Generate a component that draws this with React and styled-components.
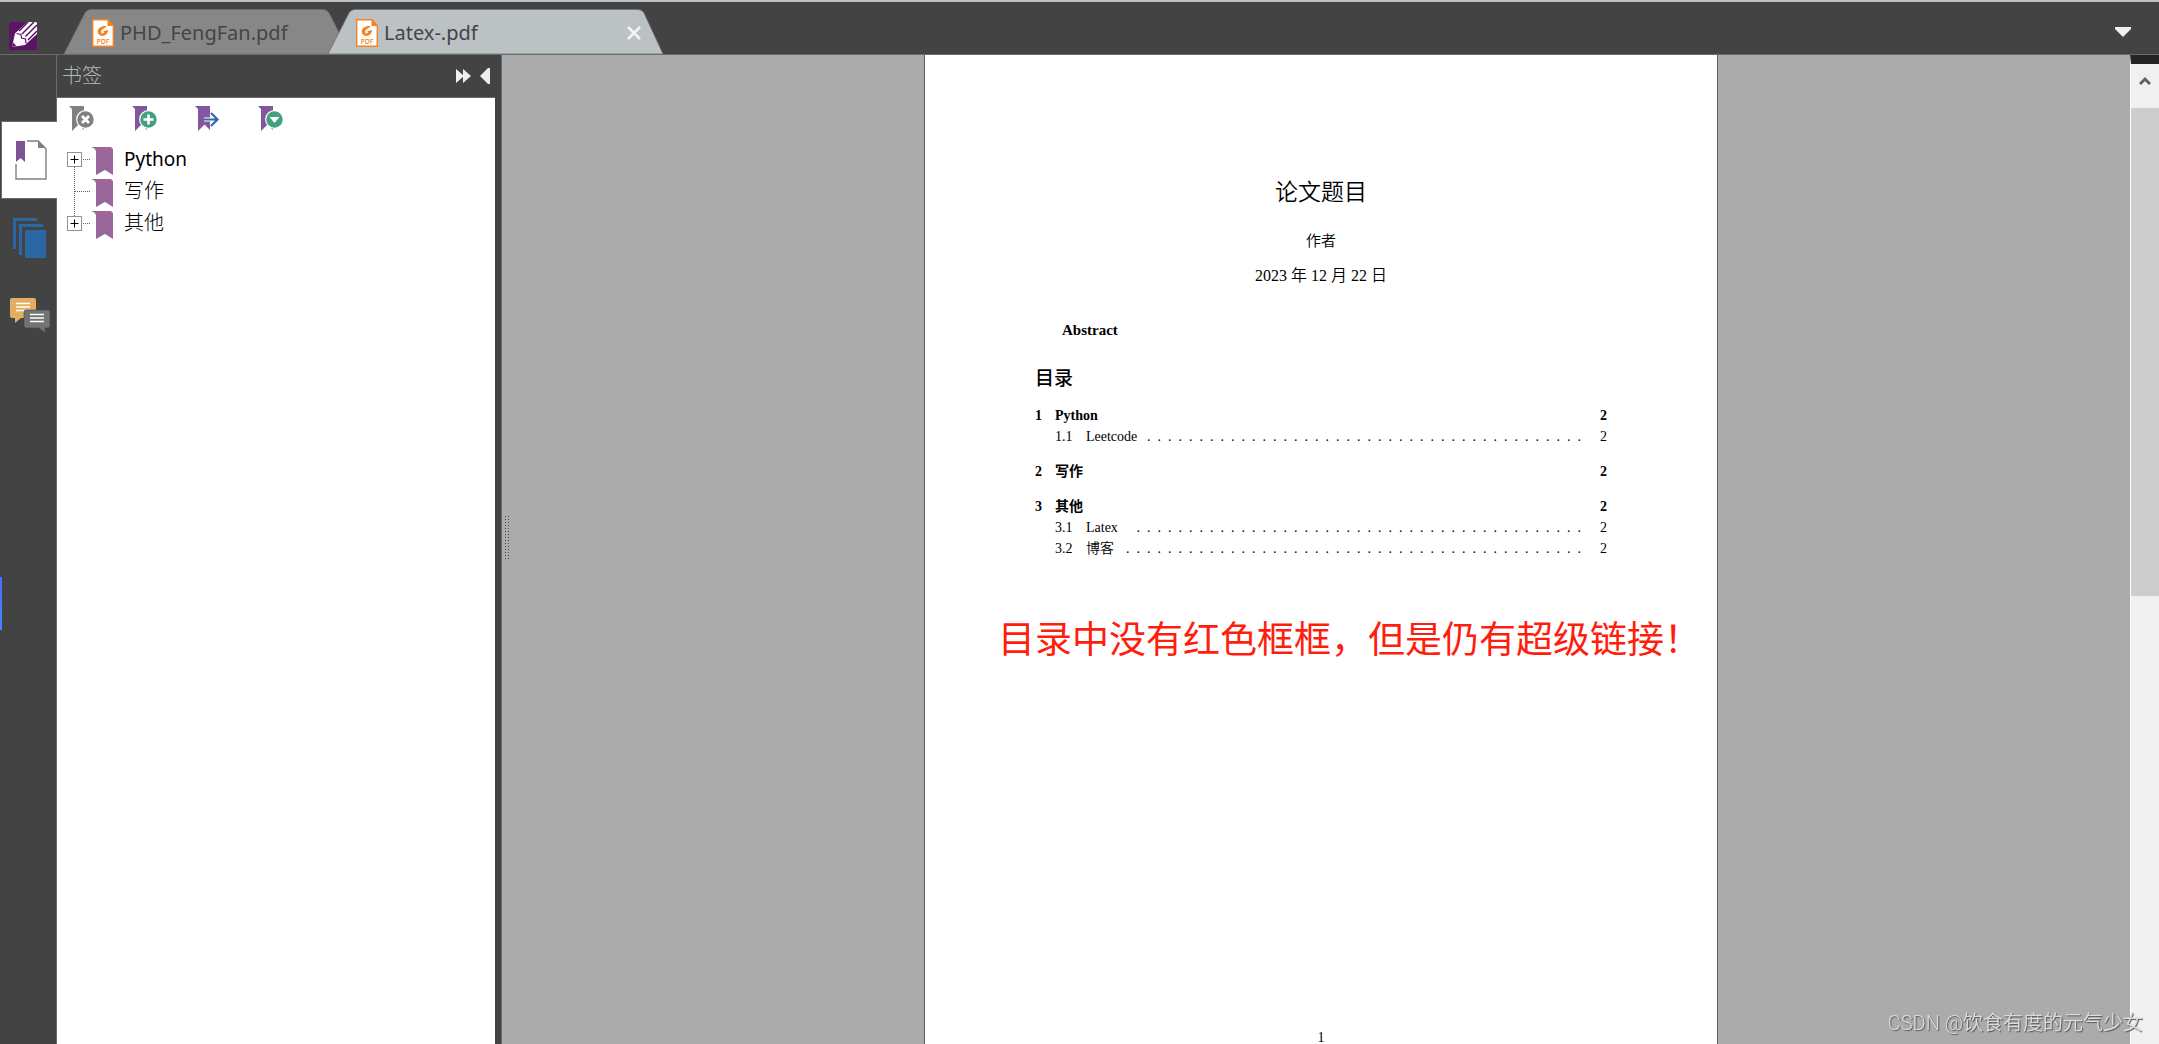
import styled, { createGlobalStyle, css } from "styled-components"

const GlobalStyle = createGlobalStyle`
    * {
        box-sizing: border-box;
    }
    body {
        margin: 0;
        font-family: "Noto Sans", "Noto Sans CJK SC", sans-serif;
        background-color: #434343;
    }
    button {
        display: flex;
        align-items: center;
        justify-content: center;
        padding: 0;
        border: none;
        background: none;
        font: inherit;
        color: inherit;
        cursor: pointer;
    }
    svg {
        display: block;
        flex-shrink: 0;
    }
`
const Container = styled.div`
    height: 100vh;
    display: flex;
    flex-direction: column;
    overflow: hidden;
    border-top: 2px solid #bcc2c6;
`

// top bar
const TopBar = styled.header`
    height: 53px;
    flex-shrink: 0;
    display: flex;
    align-items: flex-end;
    background-color: #434343;
    border-bottom: 1px solid #6b6b6b;
`
const Logo = styled.div`
    width: 64px;
    padding: 0 0 4px 9px;
`
const Tabs = styled.nav`
    flex: 1;
    display: flex;
`
const Tab = styled.div`
    position: relative;
    width: ${props => props.$active ? "335px" : "286px"};
    height: 45px;
    margin-right: -22px;
    display: flex;
    align-items: center;
    padding: 3px 21px 0 28px;
    color: #434548;
`
const TabShape = styled.svg`
    position: absolute;
    inset: 0;
    width: 100%;
    height: 100%;
`
const TabLink = styled.a`
    position: relative;
    flex: 1;
    display: flex;
    align-items: center;
    gap: 6px;
    font-size: 20px;
    line-height: 28px;
    color: inherit;
    text-decoration: none;
    white-space: nowrap;
`
const CloseButton = styled.button`
    position: relative;
    width: 16px;
    height: 16px;
`
const TabListButton = styled.button`
    width: 16px;
    height: 44px;
    margin-right: 28px;
`

// body
const Main = styled.main`
    flex: 1;
    min-height: 0;
    display: flex;
`
const Rail = styled.nav`
    position: relative;
    width: 57px;
    flex-shrink: 0;
    display: flex;
    flex-direction: column;
    padding: 66px 0 0 1px;
    border-right: 1px solid #6b6b6b;
`
const RailButton = styled.button`
    height: 78px;
    padding-left: 2px;
    ${props => props.$active && css`
        margin-right: -1px;
        background-color: #fff;
        border: 1px solid #6b6b6b;
        border-right: none;
    `}
`
const Marker = styled.span`
    position: absolute;
    left: 0;
    top: 522px;
    width: 2px;
    height: 53px;
    background: linear-gradient(#4d6bfe, #3d8bf8);
`
const SidePanel = styled.aside`
    width: 438px;
    flex-shrink: 0;
    display: flex;
    flex-direction: column;
`
const PanelHeader = styled.div`
    height: 43px;
    display: flex;
    align-items: center;
    gap: 9px;
    padding: 0 4px 0 5px;
    border-bottom: 1px solid #6b6b6b;
`
const PanelTitle = styled.h2`
    flex: 1;
    margin: 0;
    font-size: 20px;
    line-height: 28px;
    font-weight: 300;
    color: #b4b8bb;
`
const PanelBody = styled.div`
    flex: 1;
    background-color: #fff;
`
const Tools = styled.div`
    display: flex;
    gap: 37px;
    padding: 8px 12px 11px;
`
const Tree = styled.ul`
    margin: 0;
    padding: 0 0 0 10px;
    list-style: none;
`
const TreeRow = styled.li`
    height: 32px;
    display: flex;
    align-items: center;
    color: #000;
`
const TreeName = styled.span`
    margin-left: 10px;
    font-size: ${props => props.lang === "en" ? "19px" : "20px"};
    font-weight: ${props => props.lang === "en" ? 400 : 300};
    line-height: 32px;
`
const Splitter = styled.div`
    width: 17px;
    flex-shrink: 0;
    display: flex;
    align-items: center;
    border-left: 6px solid #434343;
    background: linear-gradient(90deg, #6b6b6b 1px, #a9abae 1px, #ababab);
    padding: 0 0 24px 4px;
`
const Viewer = styled.section`
    flex: 1;
    display: flex;
    justify-content: center;
    background-color: #ababab;
`
const Page = styled.article`
    width: 50%;
    max-width: 794px;
    display: flex;
    flex-direction: column;
    border: 1px solid #5c5c5c;
    border-width: 0 1px;
    background-color: #fff;
    color: #000;
    font-family: "Liberation Serif", "Noto Sans CJK SC", serif;
    font-size: 14px;
    line-height: 21px;
`
const DocTitle = styled.h1`
    margin: 120px 0 0;
    font-size: 23px;
    line-height: 36px;
    font-weight: 350;
    text-align: center;
`
const Author = styled.p`
    margin: 18px 0 0;
    font-size: 15px;
    line-height: 24px;
    font-weight: 350;
    text-align: center;
`
const DocDate = styled(Author)`
    margin-top: 11px;
    font-size: 16px;
`
const Abstract = styled.h3`
    margin: 32px 0 0 137px;
    font-size: 15px;
    line-height: 21px;
`
const TocTitle = styled.h2`
    margin: 24px 0 12px 110px;
    font-size: 19px;
    line-height: 28px;
    font-weight: 500;
`
const Toc = styled.div`
    display: flex;
    flex-direction: column;
    gap: 14px;
    padding: 0 110px;
`
const TocEntry = styled.a`
    display: flex;
    padding-left: ${props => props.$sub ? "20px" : "0"};
    font-weight: ${props => props.$sub ? 350 : 700};
    color: inherit;
    text-decoration: none;
`
const TocNumber = styled.span`
    width: ${props => props.$sub ? "31px" : "20px"};
`
const TocName = styled.span`
    flex: 1;
`
const Leader = styled.span`
    white-space: pre;
`
const TocPage = styled.span`
    width: 26px;
    text-align: right;
`
const Note = styled.p`
    margin: 51px -20px 0 73px;
    font-family: "Noto Sans CJK SC", sans-serif;
    font-size: 37px;
    line-height: 54px;
    font-weight: 400;
    color: #ff1d0d;
    white-space: nowrap;
`
const PageNumber = styled.p`
    margin: auto 0 -4px;
    line-height: 21px;
    text-align: center;
`
const ScrollBar = styled.div`
    width: 29px;
    flex-shrink: 0;
    display: flex;
    flex-direction: column;
    background-color: #f0f0f0;
    border-left: 1px solid #fff;
    border-top: 9px solid #252525;
`
const ScrollUp = styled.button`
    height: 44px;
    padding-bottom: 11px;
`
const ScrollThumb = styled.div`
    height: 52%;
    max-height: 488px;
    background-color: #cdcdcd;
`
const Watermark = styled.div`
    position: fixed;
    right: 16px;
    bottom: 6px;
    font-size: 20px;
    line-height: 30px;
    font-family: Roboto, "Noto Sans CJK SC", sans-serif;
    font-weight: 350;
    color: #dcdcdc;
    text-shadow: 1px 1px 1px #555;
`

const PdfIcon = () => (
    <svg width="22" height="28" viewBox="0 0 22 28">
        <path d="M.7 .7H16L21.3 6.5V27.3H.7Z" fill="#fff" stroke="#f58220" strokeWidth="1.4" />
        <path d="M15.5 0V7H22Z" fill="#f58220" />
        <path d="M15 7C9.500 6.500 5.500 9 5.700 12.800c.2 3.600 4 5 6.900 3.700 3-1.300 3.600-4 3.200-5.500l-4.600 1.200c1 .4 1 2-.4 2.200-1.700.1-2.100-1.600-1.200-2.900 1-1.500 3-2.300 5.400-4.500Z" fill="#f58220" />
        <text x="11" y="24.500" textAnchor="middle" fontSize="7" fontWeight="500" fill="#f58220">PDF</text>
    </svg>
)

const AppLogo = () => (
    <svg width="28" height="28" viewBox="0 0 28 28">
        <rect width="28" height="28" rx="2" fill="#5b1464" />
        <path d="M3 25 6 11.500 18 0H27L28 1V12L16 23Z" fill="#fff" />
        <path d="M10 9 19 0M13 12 25 0M16.500 14.500 28 3M19 18 28 9" fill="none" stroke="#5b1464" strokeWidth="1.500" />
        <path d="M7.500 11.500 12 12.500 12.500 16 16.500 17 17 21.500" fill="none" stroke="#5b1464" strokeWidth="1.200" />
        <path d="M3 25l1-4.500 3.500 3.500Z" fill="#5b1464" />
    </svg>
)

const ToolIcon = ({ type }) => (
    <svg width="26" height="26" viewBox="0 0 26 26">
        <path d="M0 0H15V24L9.500 18.500 3 25V3Z" fill={type === "delete" ? "#808080" : "#84569d"} />
        {type === "goto" ? (
            <>
                <path d="M9 13.500H22M16 7l6.500 6.500L16 20" fill="none" stroke="#fff" strokeWidth="4" />
                <path d="M9 13.500H22M16 7l6.500 6.500L16 20" fill="none" stroke="#2b6cab" strokeWidth="2.200" />
            </>
        ) : (
            <circle cx="16.500" cy="13.500" r="8.800" fill={type === "delete" ? "#808080" : "#42a17c"} stroke="#fff" strokeWidth="1.200" />
        )}
        {type === "delete" && <path d="M13 10l7 7M20 10l-7 7" stroke="#fff" strokeWidth="2.800" />}
        {type === "add" && <path d="M11.500 13.500h10M16.500 8.500v10" stroke="#fff" strokeWidth="2.600" />}
        {type === "menu" && <path d="M11.500 11h10l-5 6Z" fill="#fff" />}
    </svg>
)

const Branch = ({ type }) => (
    <svg width="24" height="32" viewBox="0 0 24 32">
        {type !== "first" && <path d="M7.500 0v16" stroke="#606060" strokeDasharray="1 1" />}
        {type !== "last" && <path d="M7.500 16v16" stroke="#606060" strokeDasharray="1 1" />}
        <path d="M8 16.500h16" stroke="#606060" strokeDasharray="1 1" />
        {type !== "middle" && (
            <>
                <rect x=".5" y="9.500" width="14" height="14" fill="#fff" stroke="#919191" />
                <path d="M3.500 16.500h8M7.500 12.500v8" stroke="#000" />
            </>
        )}
    </svg>
)

const BookmarkIcon = () => (
    <svg width="23" height="32" viewBox="0 0 23 32">
        <path d="M0 4H20L22 6V32L14 27 5 32V8Q4 5 0 4Z" fill="#996799" />
    </svg>
)

const tools = [
    { type: "delete", label: "删除书签" },
    { type: "add", label: "添加书签" },
    { type: "goto", label: "转到书签" },
    { type: "menu", label: "书签选项" },
]

const bookmarks = [
    { name: "Python", lang: "en", branch: "first" },
    { name: "写作", lang: "zh", branch: "middle" },
    { name: "其他", lang: "zh", branch: "last" },
]

const toc = [
    { number: "1", name: "Python", page: 2, items: [{ number: "1.1", name: "Leetcode", page: 2, dots: 42 }] },
    { number: "2", name: "写作", page: 2, items: [] },
    {
        number: "3", name: "其他", page: 2, items: [
            { number: "3.1", name: "Latex", page: 2, dots: 43 },
            { number: "3.2", name: "博客", page: 2, dots: 44 },
        ]
    },
]

const FileTab = ({ name, active }) => (
    <Tab $active={active}>
        <TabShape viewBox={active ? "0 0 335 45" : "0 0 286 45"} preserveAspectRatio="none">
            {active
                ? <path d="M0 45 21 4Q23 .5 27 .5H310Q314 .5 316 4L335 45Z" fill="#bcc1c4" stroke="#6f6f6f" strokeWidth=".8" />
                : <path d="M0 45 21 4Q23 .5 27 .5H259Q263 .5 265 4L286 45Z" fill="#878787" stroke="#6f6f6f" strokeWidth=".8" />}
        </TabShape>
        <TabLink href="#">
            <PdfIcon />
            {name}
        </TabLink>
        {active && (
            <CloseButton aria-label="关闭">
                <svg width="16" height="16" viewBox="0 0 16 16">
                    <path d="M2 2l12 12M14 2L2 14" stroke="#f4f4f4" strokeWidth="2.600" />
                </svg>
            </CloseButton>
        )}
    </Tab>
)

const App = () => {
    return (
        <Container>
            <GlobalStyle />
            <TopBar>
                <Logo><AppLogo /></Logo>
                <Tabs>
                    <FileTab name="PHD_FengFan.pdf" />
                    <FileTab name="Latex-.pdf" active />
                </Tabs>
                <TabListButton aria-label="标签列表">
                    <svg width="16" height="10" viewBox="0 0 16 10">
                        <path d="M0 0H16V2L8 10 0 2Z" fill="#f0f0f0" />
                    </svg>
                </TabListButton>
            </TopBar>
            <Main>
                <Rail>
                    <RailButton $active aria-label="书签">
                        <svg width="32" height="40" viewBox="0 0 32 40">
                            <path d="M12 1H23L31 9V39H1V24" fill="#fff" stroke="#808080" strokeWidth="1.400" />
                            <path d="M23 0V8H31Z" fill="#808080" />
                            <path d="M1 1H10V22L5.500 18 1 22Z" fill="#7d5394" />
                        </svg>
                    </RailButton>
                    <RailButton aria-label="页面">
                        <svg width="34" height="40" viewBox="0 0 34 40">
                            <path d="M24 0H0V31H3V3H24ZM30 6H6V37H9V9H30Z" fill="#2b67a3" />
                            <rect x="12" y="12" width="21" height="28" fill="#2b67a3" />
                        </svg>
                    </RailButton>
                    <RailButton aria-label="注释">
                        <svg width="42" height="36" viewBox="0 0 42 36">
                            <path d="M3 0H25Q27 0 27 2V18Q27 20 25 20H12L6 25V20H3Q1 20 1 18V2Q1 0 3 0Z" fill="#e3ae61" />
                            <path d="M7 5.500H21M7 9H21M7 12.500H21" stroke="#fff" strokeWidth="1.400" />
                            <path d="M17 12H39Q41 12 41 14V28Q41 30 39 30H36V35L30 30H17Q15 30 15 28V14Q15 12 17 12Z" fill="#737373" stroke="#434343" strokeWidth=".6" />
                            <path d="M21 16.500H35M21 20H35M21 23.500H35" stroke="#fff" strokeWidth="1.400" />
                        </svg>
                    </RailButton>
                    <Marker />
                </Rail>
                <SidePanel>
                    <PanelHeader>
                        <PanelTitle>书签</PanelTitle>
                        <button aria-label="展开">
                            <svg width="15" height="14" viewBox="0 0 15 14">
                                <path d="M0 0 7 6V0L15 7 7 14V8L0 14Z" fill="#eee" />
                            </svg>
                        </button>
                        <button aria-label="折叠">
                            <svg width="11" height="16" viewBox="0 0 11 16">
                                <path d="M0 8 8 0H10V16H8Z" fill="#eee" />
                            </svg>
                        </button>
                    </PanelHeader>
                    <PanelBody>
                        <Tools>
                            {tools.map(tool => (
                                <button key={tool.type} aria-label={tool.label}>
                                    <ToolIcon type={tool.type} />
                                </button>
                            ))}
                        </Tools>
                        <Tree>
                            {bookmarks.map(item => (
                                <TreeRow key={item.name}>
                                    <Branch type={item.branch} />
                                    <BookmarkIcon />
                                    <TreeName lang={item.lang}>{item.name}</TreeName>
                                </TreeRow>
                            ))}
                        </Tree>
                    </PanelBody>
                </SidePanel>
                <Splitter>
                    <svg width="5" height="43" viewBox="0 0 5 43">
                        <path d="M.5 0V43M3.500 0V43" stroke="#444" strokeDasharray="1 2" />
                    </svg>
                </Splitter>
                <Viewer>
                    <Page>
                        <DocTitle>论文题目</DocTitle>
                        <Author>作者</Author>
                        <DocDate>2023 年 12 月 22 日</DocDate>
                        <Abstract>Abstract</Abstract>
                        <TocTitle>目录</TocTitle>
                        <Toc>
                            {toc.map(section => (
                                <div key={section.number}>
                                    <TocEntry href="#">
                                        <TocNumber>{section.number}</TocNumber>
                                        <TocName>{section.name}</TocName>
                                        <TocPage>{section.page}</TocPage>
                                    </TocEntry>
                                    {section.items.map(item => (
                                        <TocEntry $sub href="#" key={item.number}>
                                            <TocNumber $sub>{item.number}</TocNumber>
                                            <TocName>{item.name}</TocName>
                                            <Leader>{Array(item.dots).fill(".").join("  ")}</Leader>
                                            <TocPage>{item.page}</TocPage>
                                        </TocEntry>
                                    ))}
                                </div>
                            ))}
                        </Toc>
                        <Note>目录中没有红色框框，但是仍有超级链接！</Note>
                        <PageNumber>1</PageNumber>
                    </Page>
                </Viewer>
                <ScrollBar>
                    <ScrollUp aria-label="向上滚动">
                        <svg width="12" height="10" viewBox="0 0 12 10">
                            <path d="M1 8 6 3l5 5" fill="none" stroke="#606060" strokeWidth="3" />
                        </svg>
                    </ScrollUp>
                    <ScrollThumb />
                </ScrollBar>
            </Main>
            <Watermark>CSDN @饮食有度的元气少女</Watermark>
        </Container>
    )
}

export default App
